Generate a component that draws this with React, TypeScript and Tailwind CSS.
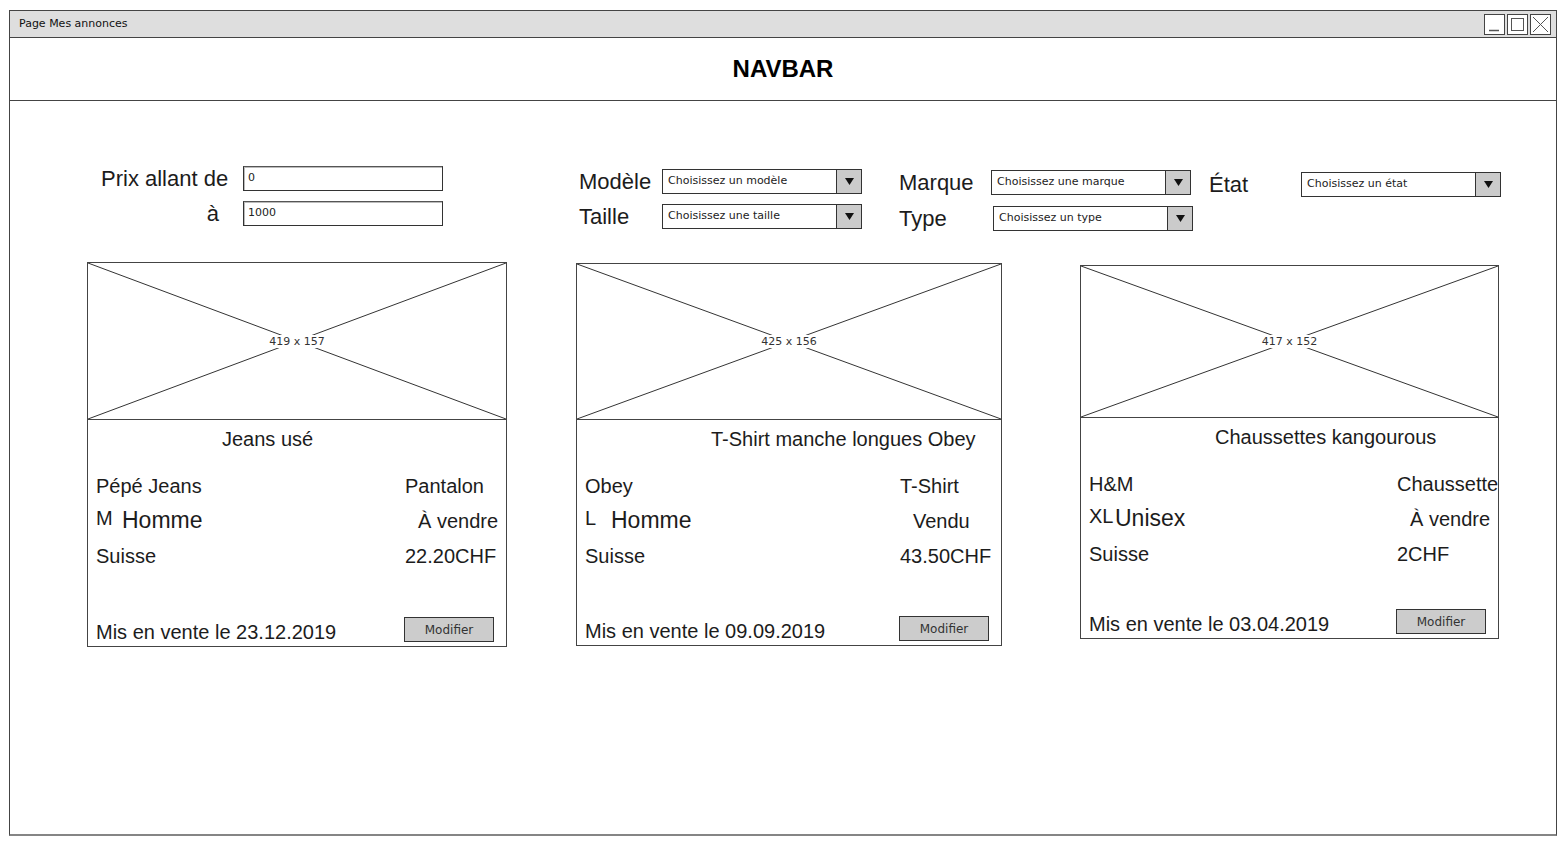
const SANS = "font-['Liberation_Sans',Arial,sans-serif]";
const SKETCH = "font-['DejaVu_Sans',sans-serif]";

interface Annonce {
  title: string;
  brand: string;
  kind: string;
  size: string;
  gender: string;
  status: string;
  country: string;
  price: string;
  date: string;
  dims: string;
  box: string;
  img: string;
}

const annonces: Annonce[] = [
  {
    title: "Jeans usé",
    brand: "Pépé Jeans",
    kind: "Pantalon",
    size: "M",
    gender: "Homme",
    status: "À vendre",
    country: "Suisse",
    price: "22.20CHF",
    date: "23.12.2019",
    dims: "419 x 157",
    box: "w-[420px] h-[385px]",
    img: "h-[157px]",
  },
  {
    title: "T-Shirt manche longues Obey",
    brand: "Obey",
    kind: "T-Shirt",
    size: "L",
    gender: "Homme",
    status: "Vendu",
    country: "Suisse",
    price: "43.50CHF",
    date: "09.09.2019",
    dims: "425 x 156",
    box: "w-[426px] h-[383px] ml-[69px] mt-[1px]",
    img: "h-[156px]",
  },
  {
    title: "Chaussettes kangourous",
    brand: "H&M",
    kind: "Chaussette",
    size: "XL",
    gender: "Unisex",
    status: "À vendre",
    country: "Suisse",
    price: "2CHF",
    date: "03.04.2019",
    dims: "417 x 152",
    box: "w-[419px] h-[374px] ml-[78px] mt-[3px]",
    img: "h-[152px]",
  },
];

export default function App() {
  return (
    <div className={`min-h-screen bg-white pt-[10px] pl-[9px] text-[#1c1c1c] ${SANS}`}>
      <div className="w-[1548px] h-[826px] border border-[#444] border-b-2 border-b-[#858585] flex flex-col">
        {/* ================= TITLE BAR ================= */}
        <div className="h-[27px] bg-[#dedede] border-b border-[#444] flex items-center justify-between pl-[9px] pr-[5px]">
          <span className={`text-[11px] text-[#111] ${SKETCH}`}>Page Mes annonces</span>
          <div className="flex gap-[2px]">
            <WinButton kind="min" />
            <WinButton kind="max" />
            <WinButton kind="close" />
          </div>
        </div>

        {/* ================= NAVBAR ================= */}
        <div className="h-[63px] border-b border-[#444] flex items-center justify-center">
          <h1 className="text-[24px] font-bold text-black">NAVBAR</h1>
        </div>

        {/* ================= FILTERS ================= */}
        <div className="pt-[65px] pl-[91px] flex items-start">
          <div className="flex flex-col gap-[10px]">
            <div className="flex items-center h-[25px]">
              <span className="w-[142px] text-[22px] leading-[25px]">Prix allant de</span>
              <TextInput value="0" />
            </div>
            <div className="flex items-center h-[25px]">
              <span className="w-[142px] text-[22px] leading-[25px] text-right pr-[24px]">à</span>
              <TextInput value="1000" />
            </div>
          </div>

          <div className="ml-[136px] mt-[3px] flex flex-col gap-[10px]">
            <Filter label="Modèle" placeholder="Choisissez un modèle" labelW="w-[83px]" />
            <Filter label="Taille" placeholder="Choisissez une taille" labelW="w-[83px]" />
          </div>

          <div className="ml-[37px] mt-[4px] flex flex-col gap-[11px]">
            <Filter label="Marque" placeholder="Choisissez une marque" labelW="w-[92px]" />
            <Filter label="Type" placeholder="Choisissez un type" labelW="w-[94px]" />
          </div>

          <div className="ml-[16px] mt-[6px]">
            <Filter label="État" placeholder="Choisissez un état" labelW="w-[92px]" />
          </div>
        </div>

        {/* ================= CARDS ================= */}
        <div className="mt-[31px] pl-[77px] flex items-start">
          {annonces.map((a) => (
            <AnnonceCard key={a.title} annonce={a} />
          ))}
        </div>
      </div>
    </div>
  );
}

function WinButton({ kind }: { kind: "min" | "max" | "close" }) {
  return (
    <div className="w-[21px] h-[21px] border border-[#444] bg-white flex items-center justify-center">
      <svg width="17" height="17" viewBox="0 0 17 17" fill="none" stroke="#555" strokeWidth="1">
        {kind === "min" && <path d="M3 14.5h10" strokeWidth="1.5" />}
        {kind === "max" && <rect x="2.5" y="2.5" width="12" height="12" />}
        {kind === "close" && <path d="M1 1l15 15M16 1L1 16" />}
      </svg>
    </div>
  );
}

function TextInput({ value }: { value: string }) {
  return (
    <div
      className={`w-[200px] h-[25px] border border-[#333] border-t-[#555] shadow-[inset_1px_1px_0_#bbb] flex items-center pl-[4px] text-[11px] text-[#222] ${SKETCH}`}
    >
      {value}
    </div>
  );
}

function Filter({ label, placeholder, labelW }: { label: string; placeholder: string; labelW: string }) {
  return (
    <div className="flex items-center h-[25px]">
      <span className={`${labelW} text-[22px] leading-[25px]`}>{label}</span>
      <div className="w-[200px] h-[25px] border border-[#333] flex">
        <div className={`flex-1 flex items-center pl-[5px] text-[11px] text-[#222] ${SKETCH}`}>{placeholder}</div>
        <div className="w-[25px] border-l border-[#333] bg-[#cbcbcb] flex items-center justify-center">
          <svg width="9" height="7" viewBox="0 0 9 7">
            <path d="M0 0h9L4.5 7z" fill="#111" />
          </svg>
        </div>
      </div>
    </div>
  );
}

function AnnonceCard({ annonce: a }: { annonce: Annonce }) {
  return (
    <div className={`${a.box} border border-[#444] flex flex-col`}>
      {/* image placeholder */}
      <div className={`${a.img} relative border-b border-[#444] shrink-0`}>
        <svg className="absolute inset-0 w-full h-full" viewBox="0 0 100 100" preserveAspectRatio="none">
          <path d="M0 0L100 100M100 0L0 100" stroke="#333" strokeWidth="1" vectorEffect="non-scaling-stroke" />
        </svg>
        <div className="absolute inset-0 flex items-center justify-center">
          <span className={`bg-white px-[3px] text-[11px] leading-[13px] text-[#333] ${SKETCH}`}>{a.dims}</span>
        </div>
      </div>

      {/* title */}
      <div className="h-[38px] flex items-center pl-[134px] text-[20px] whitespace-nowrap">{a.title}</div>

      {/* details */}
      <div className="mt-[10px] pl-[8px] pr-[9px] grid grid-cols-[1fr_92px] text-[20px] whitespace-nowrap">
        <div className="h-[35px] flex items-center">{a.brand}</div>
        <div className="h-[35px] flex items-center">{a.kind}</div>

        <div className="h-[35px] flex items-start">
          <span className="min-w-[26px] leading-[31px]">{a.size}</span>
          <span className="text-[23px] leading-[35px]">{a.gender}</span>
        </div>
        <div className="h-[35px] flex items-center pl-[13px]">{a.status}</div>

        <div className="h-[35px] flex items-center">{a.country}</div>
        <div className="h-[35px] flex items-center">{a.price}</div>
      </div>

      {/* footer */}
      <div className="mt-auto flex items-end justify-between pl-[8px] pr-[12px] pb-[4px]">
        <span className="text-[20px] leading-[23px] mb-[-2px]">Mis en vente le {a.date}</span>
        <button
          className={`w-[90px] h-[25px] border border-[#333] bg-[#cccccc] text-[12px] text-[#333] ${SKETCH}`}
        >
          Modifier
        </button>
      </div>
    </div>
  );
}
